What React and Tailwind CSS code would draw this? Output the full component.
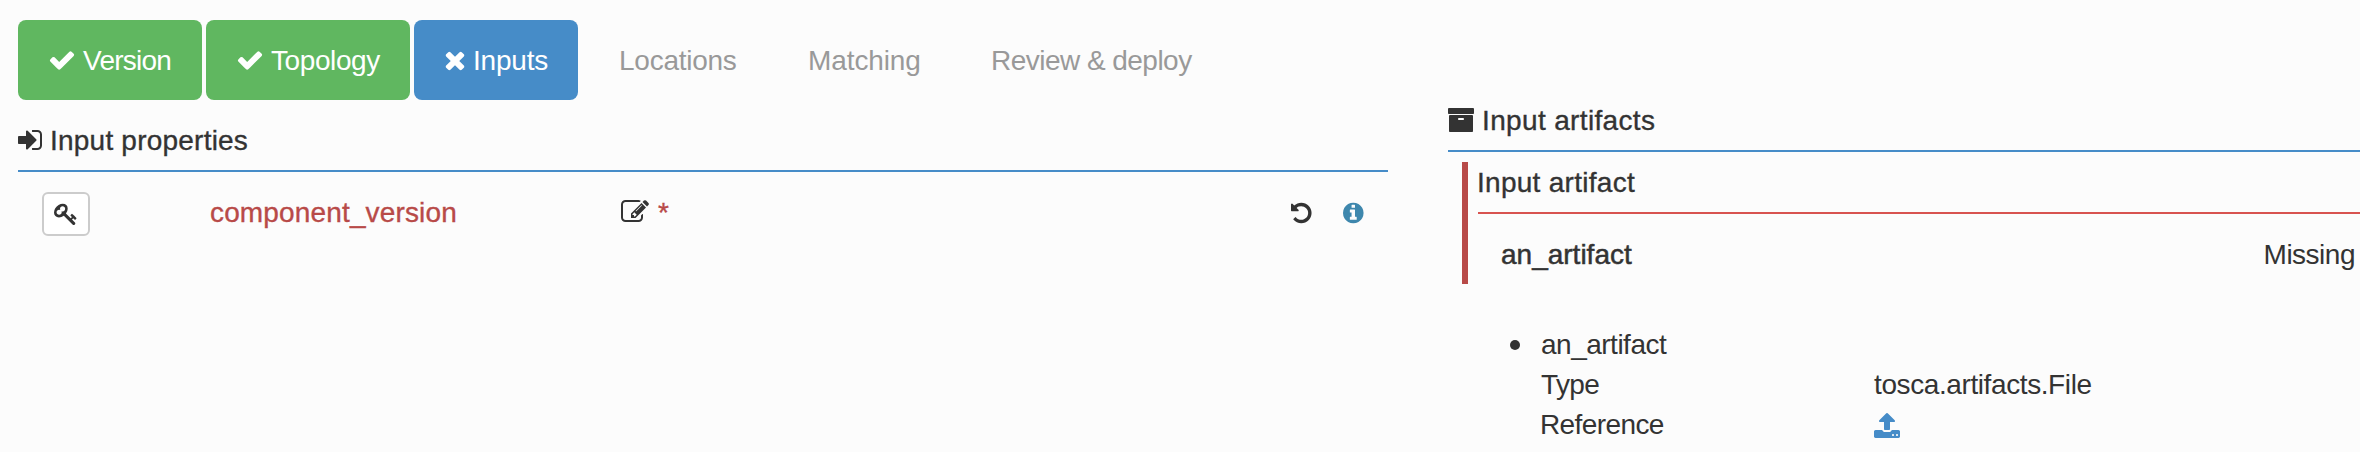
import React from "react";

// Glyphs use font coordinates (y axis up, ascent at 1536, 1792 units per em).
const GLYPHS = {
  check: [1792, "M1671 970q0 -40 -28 -68l-724 -724l-136 -136q-28 -28 -68 -28t-68 28l-136 136l-362 362q-28 28 -28 68t28 68l136 136q28 28 68 28t68 -28l294 -295l656 657q28 28 68 28t68 -28l136 -136q28 -28 28 -68z"],
  times: [1408, "M1298 214q0 -40 -28 -68l-136 -136q-28 -28 -68 -28t-68 28l-294 294l-294 -294q-28 -28 -68 -28t-68 28l-136 136q-28 28 -28 68t28 68l294 294l-294 294q-28 28 -28 68t28 68l136 136q28 28 68 28t68 -28l294 -294l294 294q28 28 68 28t68 -28l136 -136q28 -28 28 -68t-28 -68l-294 -294l294 -294q28 -28 28 -68z"],
  signIn: [1536, "M1184 640q0 -26 -19 -45l-544 -544q-19 -19 -45 -19t-45 19t-19 45v288h-448q-26 0 -45 19t-19 45v384q0 26 19 45t45 19h448v288q0 26 19 45t45 19t45 -19l544 -544q19 -19 19 -45zM1536 992v-704q0 -119 -84.5 -203.5t-203.5 -84.5h-320q-13 0 -22.5 9.5t-9.5 22.5q0 4 -1 20t-0.5 26.5t3 23.5t10 19.5t20.5 6.5h320q66 0 113 47t47 113v704q0 66 -47 113t-113 47h-312l-11.5 1t-11.5 3t-8 5.5t-7 9t-2 13.5q0 4 -1 20t-0.5 26.5t3 23.5t10 19.5t20.5 6.5h320q119 0 203.5 -84.5t84.5 -203.5z"],
  key: [1792, "M832 1024q0 80 -56 136t-136 56t-136 -56t-56 -136q0 -42 19 -83q-41 19 -83 19q-80 0 -136 -56t-56 -136t56 -136t136 -56t136 56t56 136q0 42 -19 83q41 -19 83 -19q80 0 136 56t56 136zM1683 320q0 -17 -49 -66t-66 -49q-9 0 -28.5 16t-36.5 33t-38.5 40t-24.5 26l-96 -96l220 -220q28 -28 28 -68q0 -42 -39 -81t-81 -39q-40 0 -68 28l-671 671q-176 -131 -365 -131q-163 0 -265.5 102.5t-102.5 265.5q0 160 95 313t248 248t313 95q163 0 265.5 -102.5t102.5 -265.5q0 -189 -131 -365l355 -355l96 96q-3 3 -26 24.5t-40 38.5t-33 36.5t-16 28.5q0 17 49 66t66 49q13 0 23 -10q6 -6 46 -44.5t82 -79.5t86.5 -86t73 -78t28.5 -41z"],
  edit: [1792, "M888 352l116 116l-152 152l-116 -116v-56h96v-96h56zM1328 1072q-16 16 -33 -1l-350 -350q-17 -17 -1 -33t33 1l350 350q17 17 1 33zM1408 478v-190q0 -119 -84.5 -203.5t-203.5 -84.5h-832q-119 0 -203.5 84.5t-84.5 203.5v832q0 119 84.5 203.5t203.5 84.5h832q63 0 117 -25q15 -7 18 -23q3 -17 -9 -29l-49 -49q-14 -14 -32 -8q-23 6 -45 6h-832q-66 0 -113 -47t-47 -113v-832q0 -66 47 -113t113 -47h832q66 0 113 47t47 113v126q0 13 9 22l64 64q15 15 35 7t20 -29zM1312 1216l288 -288l-672 -672h-288v288zM1756 1084l-92 -92l-288 288l92 92q28 28 68 28t68 -28l152 -152q28 -28 28 -68t-28 -68z"],
  undo: [1536, "M1536 640q0 -156 -61 -298t-164 -245t-245 -164t-298 -61q-172 0 -327 72.5t-264 204.5q-7 10 -6.5 22.5t8.5 20.5l137 138q10 9 25 9q16 -2 23 -12q73 -95 179 -147t225 -52q104 0 198.5 40.5t163.5 109.5t109.5 163.5t40.5 198.5t-40.5 198.5t-109.5 163.5t-163.5 109.5t-198.5 40.5q-98 0 -188 -35.5t-160 -101.5l137 -138q31 -30 14 -69q-17 -40 -59 -40h-448q-26 0 -45 19t-19 45v448q0 42 40 59q39 17 69 -14l130 -129q107 101 244.5 156.5t284.5 55.5q156 0 298 -61t245 -164t164 -245t61 -298z"],
  info: [1536, "M1024 160v160q0 14 -9 23t-23 9h-96v512q0 14 -9 23t-23 9h-320q-14 0 -23 -9t-9 -23v-160q0 -14 9 -23t23 -9h96v-320h-96q-14 0 -23 -9t-9 -23v-160q0 -14 9 -23t23 -9h448q14 0 23 9t9 23zM896 1056v160q0 14 -9 23t-23 9h-192q-14 0 -23 -9t-9 -23v-160q0 -14 9 -23t23 -9h192q14 0 23 9t9 23zM1536 640q0 -209 -103 -385.5t-279.5 -279.5t-385.5 -103t-385.5 103t-279.5 279.5t-103 385.5t103 385.5t279.5 279.5t385.5 103t385.5 -103t279.5 -279.5t103 -385.5z"],
  archive: [1664, "M1024 704q0 26 -19 45t-45 19h-256q-26 0 -45 -19t-19 -45t19 -45t45 -19h256q26 0 45 19t19 45zM1600 896v-960q0 -26 -19 -45t-45 -19h-1408q-26 0 -45 19t-19 45v960q0 26 19 45t45 19h1408q26 0 45 -19t19 -45zM1664 1344v-256q0 -26 -19 -45t-45 -19h-1536q-26 0 -45 19t-19 45v256q0 26 19 45t45 19h1536q26 0 45 -19t19 -45z"],
  upload: [1664, "M1280 64q0 26 -19 45t-45 19t-45 -19t-19 -45t19 -45t45 -19t45 19t19 45zM1536 64q0 26 -19 45t-45 19t-45 -19t-19 -45t19 -45t45 -19t45 19t19 45zM1664 288v-320q0 -40 -28 -68t-68 -28h-1472q-40 0 -68 28t-28 68v320q0 40 28 68t68 28h427q21 -56 70.5 -92t110.5 -36h256q61 0 110.5 36t70.5 92h427q40 0 68 -28t28 -68zM1339 936q-17 -40 -59 -40h-256v-448q0 -26 -19 -45t-45 -19h-256q-26 0 -45 19t-19 45v448h-256q-42 0 -59 40q-17 39 14 69l448 448q18 19 45 19t45 -19l448 -448q31 -30 14 -69z"],
};

function Icon({ name, className = "h-7" }) {
  const [width, d] = GLYPHS[name];
  return (
    <svg viewBox={`0 0 ${width} 1792`} className={`block w-auto shrink-0 overflow-visible fill-current ${className}`} aria-hidden="true">
      <path transform="translate(0 1536) scale(1 -1)" fillRule="evenodd" d={d} />
    </svg>
  );
}

function Step({ icon, label, className }) {
  return (
    <li className={`flex h-20 items-center rounded-lg pl-[30px] text-white ${className}`}>
      <Icon name={icon} />
      <span className="ml-[7px] pt-0.5">{label}</span>
    </li>
  );
}

function Steps() {
  return (
    <ul className="flex h-20 items-center gap-1 text-[#999]">
      <Step icon="check" label="Version" className="w-[184px] bg-[#60b760] tracking-[-0.75px]" />
      <Step icon="check" label="Topology" className="w-[204px] bg-[#60b760] tracking-[-0.4px]" />
      <Step icon="times" label="Inputs" className="w-[164px] bg-[#468cc8] tracking-[-0.2px]" />
      <li className="ml-[37px] w-[185px] pt-0.5 tracking-[-0.25px]">Locations</li>
      <li className="w-[179px] pt-0.5 tracking-[-0.1px]">Matching</li>
      <li className="pt-0.5 tracking-[-0.53px]">Review &amp; deploy</li>
    </ul>
  );
}

function InputProperties() {
  return (
    <section className="mt-5">
      <h2 className="flex h-[52px] items-start border-b-2 border-[#468cc8]">
        <Icon name="signIn" className="mt-1.5 h-7" />
        <span className="ml-2 tracking-[0.22px] [-webkit-text-stroke:0.35px]">Input properties</span>
      </h2>
      <div className="mt-5 flex items-start pl-6">
        <button className="flex h-11 w-12 rounded-md border-2 border-[#ccc] bg-white pt-[7.5px] pl-2.5">
          <Icon name="key" className="h-6" />
        </button>
        <span className="ml-[120px] w-[411px] tracking-[0.15px] text-[#b84a48] [-webkit-text-stroke:0.35px]">component_version</span>
        <Icon name="edit" className="mt-1.5 h-7" />
        <span className="ml-[9px] text-[#b84a48] [-webkit-text-stroke:0.35px]">*</span>
        <div className="mt-[9px] mr-6 ml-auto flex gap-8">
          <Icon name="undo" className="h-6" />
          <Icon name="info" className="h-6 text-[#3e87ad]" />
        </div>
      </div>
    </section>
  );
}

function InputArtifacts() {
  return (
    <section className="w-[912px] pt-20">
      <h2 className="flex h-[52px] items-start border-b-2 border-[#468cc8]">
        <Icon name="archive" className="mt-1.5 h-7" />
        <span className="ml-2 tracking-[0.35px] [-webkit-text-stroke:0.35px]">Input artifacts</span>
      </h2>
      <div className="mt-2.5 ml-3.5 h-[122px] border-l-6 border-[#b84a48] pl-2.5">
        <h3 className="h-[52px] border-b-2 border-[#d85350] tracking-[0.28px] [-webkit-text-stroke:0.35px]">
          <span className="-ml-px">Input artifact</span>
        </h3>
        <div className="mt-5 flex h-10 justify-between pr-[5px] pl-[23px]">
          <span className="[-webkit-text-stroke:0.5px]">an_artifact</span>
          <span className="tracking-[-0.5px]">Missing</span>
        </div>
      </div>
      <ul className="mt-10">
        <li className="flex pl-[62px]">
          <span className="mt-4 h-2.5 w-2.5 rounded-full bg-[#333]" />
          <div className="ml-5 grid auto-rows-[40px] grid-cols-[334px_1fr]">
            <span className="col-span-2 pl-px tracking-[-0.5px]">an_artifact</span>
            <span className="pl-px tracking-[-0.6px]">Type</span>
            <span className="tracking-[-0.4px]">tosca.artifacts.File</span>
            <span className="tracking-[-0.6px]">Reference</span>
            <Icon name="upload" className="mt-2 h-7 text-[#468cc8]" />
          </div>
        </li>
      </ul>
    </section>
  );
}

export default function App() {
  return (
    <main className="flex h-[452px] w-[2360px] overflow-hidden bg-[#fcfcfc] pt-5 pl-[18px] font-['Liberation_Sans',Arial,sans-serif] text-[28px] leading-[42px] text-[#333]">
      <div className="mr-[60px] w-[1370px]">
        <Steps />
        <InputProperties />
      </div>
      <InputArtifacts />
    </main>
  );
}
